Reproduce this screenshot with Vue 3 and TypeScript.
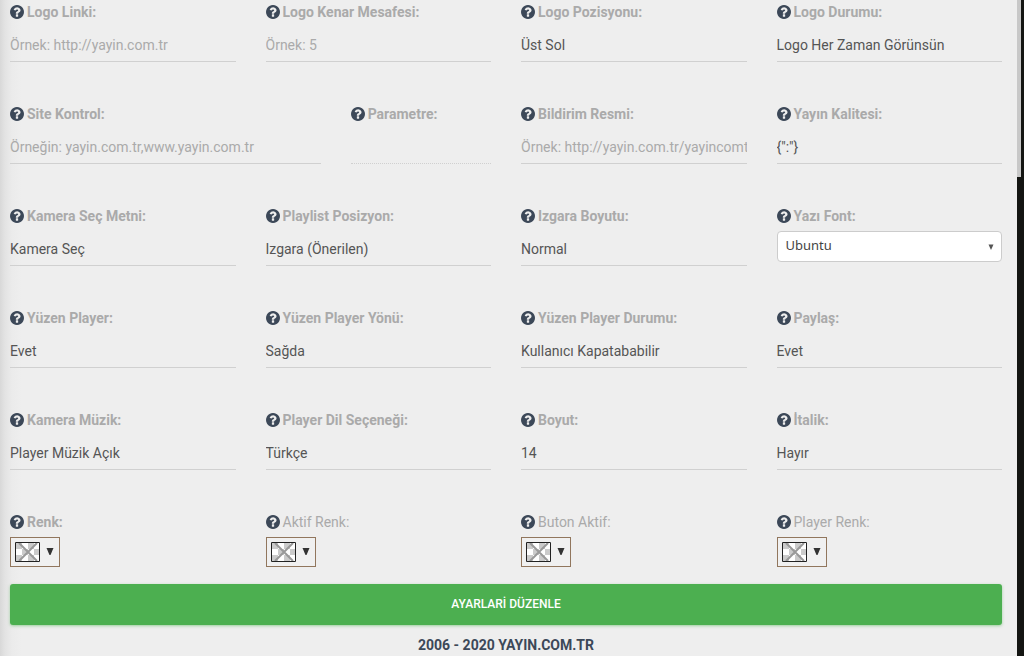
<script setup lang="ts">
import { reactive } from 'vue'

type Kind = 'text' | 'choice' | 'font' | 'color'

interface Field {
  id: string
  label: string
  kind: Kind
  value?: string
  placeholder?: string
  size?: 'wide' | 'narrow'
  light?: boolean
  dotted?: boolean
}

const fields = reactive<Field[]>([
  { id: 'logo-link', label: 'Logo Linki:', kind: 'text', value: '', placeholder: 'Örnek: http://yayin.com.tr' },
  { id: 'logo-margin', label: 'Logo Kenar Mesafesi:', kind: 'text', value: '', placeholder: 'Örnek: 5' },
  { id: 'logo-position', label: 'Logo Pozisyonu:', kind: 'choice', value: 'Üst Sol' },
  { id: 'logo-state', label: 'Logo Durumu:', kind: 'choice', value: 'Logo Her Zaman Görünsün' },
  { id: 'site-check', label: 'Site Kontrol:', kind: 'text', value: '', placeholder: 'Örneğin: yayin.com.tr,www.yayin.com.tr', size: 'wide' },
  { id: 'parameter', label: 'Parametre:', kind: 'text', value: '', size: 'narrow', dotted: true },
  { id: 'notice-image', label: 'Bildirim Resmi:', kind: 'text', value: '', placeholder: 'Örnek: http://yayin.com.tr/yayincomtr' },
  { id: 'quality', label: 'Yayın Kalitesi:', kind: 'text', value: '{":"}' },
  { id: 'camera-text', label: 'Kamera Seç Metni:', kind: 'text', value: 'Kamera Seç' },
  { id: 'playlist-position', label: 'Playlist Posizyon:', kind: 'choice', value: 'Izgara (Önerilen)' },
  { id: 'grid-size', label: 'Izgara Boyutu:', kind: 'choice', value: 'Normal' },
  { id: 'font', label: 'Yazı Font:', kind: 'font', value: 'Ubuntu' },
  { id: 'floating', label: 'Yüzen Player:', kind: 'choice', value: 'Evet' },
  { id: 'floating-side', label: 'Yüzen Player Yönü:', kind: 'choice', value: 'Sağda' },
  { id: 'floating-state', label: 'Yüzen Player Durumu:', kind: 'choice', value: 'Kullanıcı Kapatababilir' },
  { id: 'share', label: 'Paylaş:', kind: 'choice', value: 'Evet' },
  { id: 'camera-music', label: 'Kamera Müzik:', kind: 'choice', value: 'Player Müzik Açık' },
  { id: 'language', label: 'Player Dil Seçeneği:', kind: 'choice', value: 'Türkçe' },
  { id: 'font-size', label: 'Boyut:', kind: 'text', value: '14' },
  { id: 'italic', label: 'İtalik:', kind: 'choice', value: 'Hayır' },
  { id: 'color', label: 'Renk:', kind: 'color' },
  { id: 'active-color', label: 'Aktif Renk:', kind: 'color', light: true },
  { id: 'active-button', label: 'Buton Aktif:', kind: 'color', light: true },
  { id: 'player-color', label: 'Player Renk:', kind: 'color', light: true },
])
</script>

<template>
  <div class="page">
    <main class="content">
      <form @submit.prevent>
        <div class="fields">
          <div v-for="field in fields" :key="field.id" class="field" :class="field.size">
            <label :id="field.id + '-label'" :for="field.id" :class="{ light: field.light }">
              <svg class="help" viewBox="0 0 1536 1536" aria-hidden="true">
                <path d="M896 1248v-192q0-14-9-23t-23-9H672q-14 0-23 9t-9 23v192q0 14 9 23t23 9h192q14 0 23-9t9-23zm256-672q0-88-55.500-163T958 297t-170-41q-243 0-371 213-15 24 8 42l132 100q7 6 19 6 16 0 25-12 53-68 86-92 34-24 86-24 48 0 85.500 26t37.500 59q0 38-20 61t-68 45q-63 28-115.500 86.500T640 892v36q0 14 9 23t23 9h192q14 0 23-9t9-23q0-19 21.500-49.500T972 829q32-18 49-28.500t46-35 44.500-48 28-60.500 12.500-81zm384 192q0 209-103 385.500T1153.500 1433 768 1536t-385.500-103T103 1153.500 0 768t103-385.500T382.500 103 768 0t385.500 103T1433 382.500 1536 768z" />
              </svg>
              <span>{{ field.label }}</span>
            </label>
            <input
              v-if="field.kind === 'text'"
              :id="field.id"
              v-model="field.value"
              class="line"
              :class="{ dotted: field.dotted }"
              type="text"
              :placeholder="field.placeholder"
            />
            <select v-else-if="field.kind === 'choice'" :id="field.id" v-model="field.value" class="line">
              <option>{{ field.value }}</option>
            </select>
            <div v-else-if="field.kind === 'font'" class="font-box">
              <select :id="field.id" v-model="field.value">
                <option>{{ field.value }}</option>
              </select>
              <svg class="font-arrow" viewBox="0 0 6 6" aria-hidden="true"><path d="M.5.5h5L3 6z" /></svg>
            </div>
            <button v-else :id="field.id" class="picker" type="button" :aria-labelledby="field.id + '-label'">
              <svg class="swatch" viewBox="0 0 25 20" aria-hidden="true">
                <path fill="#fff" d="M0 0h25v20H0z" />
                <path fill="#cbcbcb" d="M1 1h6v6H1zM13 1h6v6h-6zM7 7h6v6H7zM19 7h5v6h-5zM1 13h6v6H1zM13 13h6v6h-6z" />
                <path fill="none" stroke="#999" stroke-width="2" d="M4 1l18 18M22 1L4 19" />
                <path fill="none" stroke="#222" d="M.5.5h24v19H.5z" />
              </svg>
              <svg class="picker-arrow" viewBox="0 0 8 8" aria-hidden="true"><path d="M.5 0h7L4.500 7h-1z" /></svg>
            </button>
          </div>
        </div>
        <button class="save" type="submit">AYARLARİ DÜZENLE</button>
      </form>
      <footer>2006 - 2020 YAYIN.COM.TR</footer>
    </main>
    <div class="track" aria-hidden="true"><div class="thumb"></div></div>
  </div>
</template>

<style>
body {
  background: #eee;
}
</style>

<style scoped>
.page {
  display: flex;
  min-height: 100vh;
  font-family: Roboto, "Liberation Sans", sans-serif;
  font-size: 14px;
  line-height: 20px;
  color: #555;
  background: #eee;
}
.content {
  flex: 1;
  min-width: 0;
  box-sizing: border-box;
  padding: 2px 15px 1px 10px;
  background: linear-gradient(to right, #d8d8d8 0, #e3e3e3 5px, #ebebeb 12px, #eee 22px);
}
.fields {
  display: grid;
  grid-template-columns: repeat(12, minmax(0, 1fr));
  gap: 42px 30px;
  align-items: start;
}
.field {
  grid-column: span 3;
  display: flex;
  flex-direction: column;
  align-items: flex-start;
}
.wide {
  grid-column: span 4;
}
.narrow {
  grid-column: span 2;
}
label {
  display: flex;
  align-items: center;
  gap: 3px;
  font-weight: 700;
  color: #aaa;
}
label.light {
  font-weight: 400;
}
.help {
  width: 14px;
  height: 14px;
  fill: #3c4858;
}
.line {
  width: 100%;
  height: 34px;
  margin: 6px 0 0;
  padding: 0;
  box-sizing: border-box;
  border: 0;
  border-bottom: 1px solid #d0d0d0;
  border-radius: 0;
  background: transparent;
  font: inherit;
  color: #555;
  appearance: none;
  outline: none;
}
.line.dotted {
  height: 35px;
  border-bottom-style: dotted;
}
/* The dotted line keeps the same row height as the solid ones. */
.narrow {
  height: 60px;
}
.line::placeholder {
  color: #aaa;
  opacity: 1;
}
.font-box {
  display: grid;
  grid-template-columns: 1fr 16px;
  align-items: center;
  width: 100%;
  height: 31px;
  margin-top: 5px;
  box-sizing: border-box;
  border: 1px solid #ccc;
  border-radius: 4px;
  background: #fff;
}
.font-box select {
  grid-area: 1 / 1 / 2 / 3;
  height: 29px;
  padding: 0 8px 3px;
  border: 0;
  background: transparent;
  font: 13px "Noto Sans", sans-serif;
  color: #444;
  appearance: none;
  outline: none;
}
.font-arrow {
  grid-area: 1 / 2;
  width: 6px;
  height: 6px;
  margin-left: 3px;
  fill: #555;
  pointer-events: none;
}
.picker {
  display: flex;
  align-items: center;
  gap: 6px;
  height: 30px;
  margin: 5px 0 0;
  padding: 0 5px 0 4px;
  border: 1px solid #91765d;
  background: #f0f0f0;
}
.swatch {
  width: 25px;
  height: 20px;
}
.picker-arrow {
  width: 8px;
  height: 8px;
  fill: #333;
}
.save {
  display: block;
  width: 100%;
  height: 41px;
  margin: 17px 0 10px;
  padding: 0 0 2px;
  border: 0;
  border-radius: 3px;
  background: #4caf50;
  box-shadow: 0 1px 3px rgba(76, 175, 80, 0.5);
  font: 500 12px/20px Roboto, sans-serif;
  color: #fff;
}
footer {
  font-weight: 700;
  text-align: center;
  color: #3c4858;
}
.track {
  width: 7px;
  background: #141512;
}
.thumb {
  width: 4px;
  height: 27vh;
  background: #c8c8c8;
}
</style>
